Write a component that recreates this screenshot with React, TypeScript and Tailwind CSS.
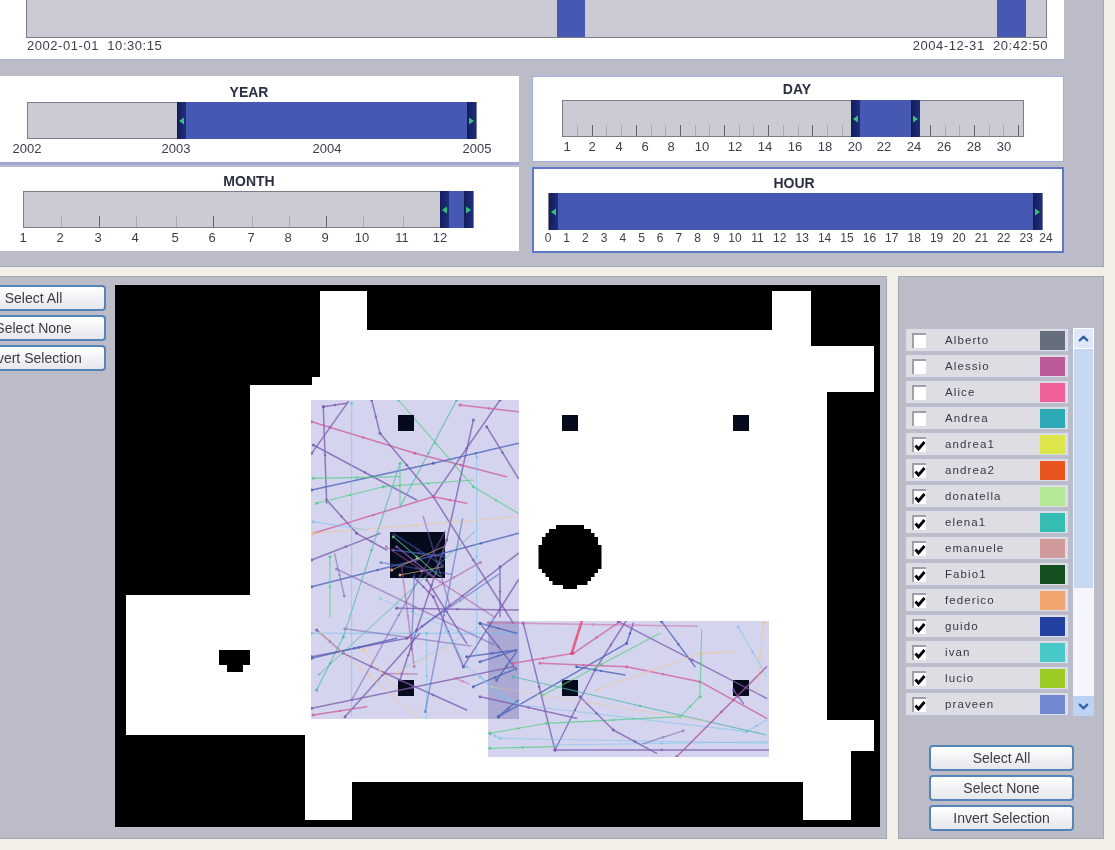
import React from "react";
import { ChevronUp, ChevronDown } from "lucide-react";

type Mark = { x: number; t: string };
const sans = "font-['Liberation_Sans',Arial,sans-serif]";

function Handle({ dir }: { dir: "l" | "r" }) {
  return (
    <div className="w-[9px] h-full bg-gradient-to-r from-[#131d58] to-[#1f2f80] flex items-center justify-center shrink-0">
      <svg width="7" height="8" viewBox="0 0 7 8">
        <path d={dir === "l" ? "M6 0.5 L1 4 L6 7.5Z" : "M1 0.5 L6 4 L1 7.5Z"} fill="#36c47a" />
      </svg>
    </div>
  );
}

function Slider(props: {
  title: string; center: number; titleH: number; left: number; width: number; start: number; end: number;
  ticks?: number[]; marks: Mark[]; size?: string; labelTop?: string;
}) {
  const { title, center, titleH, left, width, start, end, ticks = [], marks, size = "text-[13px]", labelTop = "top-[2px]" } = props;
  return (
    <div style={{ paddingLeft: left }}>
      <div style={{ marginLeft: -left, width: center * 2, height: titleH }} className="text-center text-[14px] leading-[18px] font-bold text-[#2b3040]">{title}</div>
      <div style={{ width }} className="relative h-[37px] flex bg-[#cbcbd3] border border-[#7b7d88]">
        {ticks.map((t, i) => (
          <div key={i} style={{ left: t }} className={`absolute bottom-0 w-px h-[11px] ${i % 3 === 1 ? "bg-[#5d6070]" : "bg-[#a9aab6]"}`} />
        ))}
        <div style={{ width: start }} className="shrink-0" />
        <div style={{ width: end - start }} className="relative z-10 -my-px flex justify-between bg-[#4658b2]">
          <Handle dir="l" />
          <Handle dir="r" />
        </div>
      </div>
      <div style={{ width }} className="relative h-[20px]">
        {marks.map((m) => (
          <span key={m.t + m.x} style={{ left: m.x }} className={`absolute ${labelTop} -translate-x-1/2 ${size} leading-[16px] text-[#3b3f4a]`}>{m.t}</span>
        ))}
      </div>
    </div>
  );
}

const yearMarks = [[0, "2002"], [149, "2003"], [300, "2004"], [450, "2005"]].map(([x, t]) => ({ x: x as number, t: t as string }));
const monthMarks = [0, 37, 75, 112, 152, 189, 228, 265, 302, 339, 379, 417].map((x, i) => ({ x, t: String(i + 1) }));
const dayMarks: Mark[] = [[5, "1"], [30, "2"], [57, "4"], [83, "6"], [109, "8"], [140, "10"], [173, "12"], [203, "14"], [233, "16"], [263, "18"], [293, "20"], [322, "22"], [352, "24"], [382, "26"], [412, "28"], [442, "30"]].map(([x, t]) => ({ x: x as number, t: t as string }));
const hourMarks = Array.from({ length: 25 }, (_, i) => ({ x: i === 24 ? 498 : i < 10 ? i * 18.7 : 187 + (i - 10) * 22.4, t: String(i) }));
const monthTicks = [37, 75, 112, 152, 189, 228, 265, 302, 339, 379];
const dayTicks = Array.from({ length: 31 }, (_, i) => 14 + i * 14.7).filter((x) => x < 285 || x > 355);

const people: [string, string, boolean][] = [
  ["Alberto", "#666d7d", false], ["Alessio", "#bd5a9a", false], ["Alice", "#ee6097", false], ["Andrea", "#2ca9b4", false],
  ["andrea1", "#dde64a", true], ["andrea2", "#e8551f", true], ["donatella", "#b4e896", true], ["elena1", "#35bdb4", true],
  ["emanuele", "#d09a9a", true], ["Fabio1", "#154f22", true], ["federico", "#f2a56e", true], ["guido", "#21409f", true],
  ["ivan", "#48c8c8", true], ["lucio", "#9ccb25", true], ["praveen", "#6f88d0", true],
];

const C: Record<string, string> = { v: "#7a5cae", b: "#4a62b8", p: "#cf5f9c", g: "#52cf86", l: "#78c4ea", o: "#f3c48c", t: "#4fb8a8", r: "#ea3f62", m: "#a9509c" };
const z5: [string, number, number, number, number][] = [
  ["v",35,190,145,35],["p",35,95,345,190],["p",345,190,620,260],["v",70,50,80,340],["v",70,50,140,40],["v",40,165,350,330],
  ["v",215,30,240,130],["v",240,130,400,320],["v",400,320,640,700],["t",470,30,300,350],["g",295,30,520,290],["g",520,290,655,370],
  ["v",600,30,400,320],["v",520,90,440,450],["v",440,450,350,720],["v",350,720,300,870],["b",35,300,400,220],["b",400,220,655,160],
  ["p",40,430,400,320],["p",400,320,500,340],["v",560,110,655,265],["p",480,45,655,65],["v",35,510,240,430],["o",40,430,655,380],
  ["b",35,590,430,490],["b",430,490,655,430],["v",80,330,170,430],["v",170,430,260,480],["v",290,655,655,660],["t",50,900,130,740],
  ["t",130,740,300,220],["v",35,800,320,745],["v",320,745,655,490],["b",35,805,290,745],["v",50,720,130,790],["v",130,790,300,870],
  ["v",300,870,500,960],["b",500,800,650,780],["v",490,830,655,570],["v",490,830,400,620],["v",400,620,340,560],["p",40,975,200,950],
  ["v",135,980,360,730],["v",35,955,640,830],["b",520,890,650,835],["b",595,980,655,930],["l",440,720,500,830],["l",500,830,655,950],
  ["g",40,265,300,260],["g",50,340,250,290],["g",250,290,520,270],["o",60,730,350,980],["l",380,730,380,985],["l",35,730,655,730],
  ["l",155,40,155,980],["l",530,200,530,800],["g",300,220,300,350],["g",90,500,90,680],["l",40,395,200,420],["o",190,780,290,900],
  ["v",600,530,600,680],["v",380,570,500,760],["o",275,540,430,470],["g",280,440,420,560],["b",280,480,435,500],["o",300,555,430,530],["v",290,470,400,560],
];
const z6: [string, number, number, number, number][] = [
  ["v",0,40,110,180],["v",130,40,225,420],["v",225,420,345,180],["v",345,180,440,30],["b",0,40,110,70],["b",55,320,440,100],["b",440,100,460,40],
  ["b",0,155,110,120],["b",50,210,110,125],["p",100,160,280,130],["p",280,130,420,35],["r",275,130,305,35],["p",180,160,440,170],["p",440,170,660,215],
  ["p",660,215,860,325],["b",290,170,435,195],["b",545,35,645,170],["v",415,35,860,265],["v",225,420,865,420],["l",0,200,60,260],["l",60,260,120,285],
  ["l",120,285,800,365],["l",800,365,860,330],["l",225,405,865,395],["g",30,415,225,410],["l",30,370,60,385],["l",60,385,860,400],["t",100,200,860,375],
  ["o",350,240,660,130],["o",660,130,770,125],["g",30,370,200,340],["g",200,340,600,320],["g",600,320,660,260],["g",660,260,665,60],["g",190,255,540,70],
  ["v",0,260,290,325],["v",300,260,400,360],["v",400,360,530,430],["m",590,440,860,170],["o",850,40,830,250],["v",760,240,790,280],["l",775,50,860,200],
];

let seed = 20240;
const rnd = () => {
  seed = (seed * 1664525 + 1013904223) % 4294967296;
  return seed / 4294967296;
};
const palette = "vvbbppmgltool";
const extra = Array.from({ length: 22 }, (_, i) => {
  const c = palette[Math.floor(rnd() * palette.length)];
  const a = i < 19 ? [311, 500, 208, 219] : [488, 621, 281, 136];
  return [c, a[0] + rnd() * a[2], a[1] + rnd() * a[3], a[0] + rnd() * a[2], a[1] + rnd() * a[3]] as const;
});

const segs = [
  ...z5.map(([c, a, b, d, e]) => [c, 300 + a / 3, 390 + b / 3, 300 + d / 3, 390 + e / 3] as const),
  ...z6.map(([c, a, b, d, e]) => [c, 480 + a / 3, 610 + b / 3, 480 + d / 3, 610 + e / 3] as const),
  ...extra,
];

const circleRows = Array.from({ length: 16 }, (_, i) => {
  const y = 525 + i * 4;
  const dy = y + 2 - 555.5;
  const half = Math.round(Math.sqrt(Math.max(0, 32 * 32 - dy * dy)) / 3.5) * 3.5;
  return { y, half };
});

function FloorMap() {
  const ox = 115, oy = 285;
  return (
    <svg width="765" height="542" viewBox={`${ox} ${oy} 765 542`} className="block bg-black shrink-0">
      <defs>
        <clipPath id="zones">
          <rect x="311" y="400" width="208" height="319" />
          <rect x="488" y="621" width="281" height="136" />
        </clipPath>
      </defs>
      <path fill="#fff" d="M320 291H367V330H772V291H811V346H874V392H827V720H874V751H851V820H803V782H352V820H305V735H126V595H250V385H312V377H320Z" />
      <rect x="311" y="400" width="208" height="319" fill="#d4d4ee" />
      <rect x="488" y="621" width="281" height="136" fill="#d4d4ee" />
      <rect x="488" y="621" width="31" height="98" fill="#a9a9d4" />
      {[[398, 680], [562, 680], [733, 680]].map(([x, y]) => (
        <rect key={x + "-" + y} x={x} y={y} width="16" height="16" fill="#050a1c" />
      ))}
      <rect x="390" y="532" width="55" height="46" fill="#050a1c" />
      {circleRows.map((r) => (
        <rect key={r.y} x={570 - r.half} y={r.y} width={r.half * 2} height="4" fill="#000" />
      ))}
      <path fill="#000" d="M219 650H250V665H243V672H227V665H219Z" />
      <g clipPath="url(#zones)" strokeLinecap="round">
        {segs.map(([c, x1, y1, x2, y2], i) => (
          <g key={i} stroke={C[c]} fill={C[c]} opacity={i >= z5.length + z6.length ? 0.6 : 0.9}>
            <line x1={x1} y1={y1} x2={x2} y2={y2} strokeWidth={c === "r" ? 2.6 : c === "v" || c === "b" || c === "p" || c === "m" ? 1.5 : 1.1} strokeOpacity={c === "o" || c === "l" ? 0.65 : 0.85} />
            <circle cx={x1} cy={y1} r="1.5" stroke="none" />
            <circle cx={(x1 + x2) / 2} cy={(y1 + y2) / 2} r="1.2" stroke="none" />
          </g>
        ))}
      </g>
      {[[398, 415], [562, 415], [733, 415]].map(([x, y]) => (
        <rect key={x + "-" + y} x={x} y={y} width="16" height="16" fill="#050a1c" />
      ))}
    </svg>
  );
}

function Btn({ children }: { children: React.ReactNode }) {
  return (
    <button className="h-[26px] w-[145px] shrink-0 rounded-[4px] border-2 border-[#5585b8] bg-gradient-to-b from-white to-[#e6e6ec] text-[14px] leading-[20px] text-[#3a3d46]">
      {children}
    </button>
  );
}

function Row({ name, color, on }: { name: string; color: string; on: boolean }) {
  return (
    <div className="h-[24px] flex items-center bg-[#dddde3] border border-[#b8bfd2]">
      <div className="ml-[6px] w-[14px] h-[15px] bg-white border-l-2 border-t-2 border-[#9d9faa] flex items-center justify-center shrink-0">
        {on && (
          <svg width="12" height="11" viewBox="0 0 12 11" className="shrink-0">
            <path d="M1.5 5.5 L4.5 9 L10.5 2" fill="none" stroke="#000" strokeWidth="2.8" />
          </svg>
        )}
      </div>
      <span className="ml-[19px] flex-1 text-[11.5px] leading-[14px] tracking-[1.1px] text-[#353844]">{name}</span>
      <div style={{ backgroundColor: color }} className="w-[25px] h-[19px] mr-[3px] shrink-0" />
    </div>
  );
}

export default function App() {
  return (
    <div className={`w-[1115px] h-[850px] overflow-hidden bg-[#f1efe6] ${sans} blur-[0.5px]`}>
      <div className="w-[1104px] h-[267px] bg-[#bcbcc8] border-r border-b border-[#a2a6b6]">
        <div className="w-[1064px] h-[60px] bg-white border-b border-[#aab2d8] pl-[26px]">
          <div className="w-[1021px] h-[38px] flex bg-[#cbcbd5] border-b border-x border-[#7b7d88]">
            <div className="w-[530px] shrink-0" />
            <div className="w-[28px] bg-[#4658b2] shrink-0" />
            <div className="w-[412px] shrink-0" />
            <div className="w-[29px] bg-[#4658b2] shrink-0" />
          </div>
          <div className="w-[1022px] pl-[1px] flex justify-between text-[13px] leading-[16px] tracking-[0.55px] text-[#3b3f4a]">
            <span className="whitespace-pre">2002-01-01  10:30:15</span>
            <span className="whitespace-pre">2004-12-31  20:42:50</span>
          </div>
        </div>
        <div className="mt-[16px] flex gap-[13px]">
          <div className="w-[519px] flex flex-col gap-[2px]">
            <div className="h-[89px] bg-white border-b-[3px] border-[#9ea6d2] pt-[7px]">
              <Slider title="YEAR" center={249} titleH={19} left={27} width={450} start={149} end={450} marks={yearMarks} />
            </div>
            <div className="h-[84px] bg-white pt-[5px]">
              <Slider title="MONTH" center={249} titleH={19} left={23} width={451} start={416} end={451} ticks={monthTicks} marks={monthMarks} />
            </div>
          </div>
          <div className="w-[532px] flex flex-col gap-[5px]">
            <div className="h-[86px] bg-white border border-[#a3aedc] pt-[3px]">
              <Slider title="DAY" center={264} titleH={20} left={29} width={462} start={288} end={357} ticks={dayTicks} marks={dayMarks} />
            </div>
            <div className="h-[86px] bg-white border-2 border-[#5f78cc] pt-[5px]">
              <Slider title="HOUR" center={260} titleH={19} left={14} width={495} start={0} end={494} marks={hourMarks} size="text-[12px]" labelTop="top-[0px]" />
            </div>
          </div>
        </div>
      </div>
      <div className="mt-[9px] flex gap-[11px]">
        <div className="w-[887px] h-[563px] bg-[#bcbcc8] border-t border-r border-b border-[#a2a6b6] pt-[8px] flex overflow-hidden">
          <div className="w-[115px] shrink-0 flex flex-col gap-[4px] ml-[-39px] mr-[39px]">
            <div className="w-[145px] flex flex-col gap-[4px]">
              <Btn>Select All</Btn>
              <Btn>Select None</Btn>
              <Btn>Invert Selection</Btn>
            </div>
          </div>
          <FloorMap />
        </div>
        <div className="w-[206px] h-[563px] bg-[#bcbcc8] border border-[#a2a6b6] pt-[51px] pl-[6px]">
          <div className="flex gap-[4px] h-[388px]">
            <div className="w-[164px] flex flex-col gap-[2px]">
              {people.map(([n, c, on]) => <Row key={n} name={n} color={c} on={on} />)}
            </div>
            <div className="w-[21px] flex flex-col bg-[#f5f6fc]">
              <div className="h-[21px] bg-[#dfe8f8] border border-white flex items-center justify-center">
                <ChevronUp size={15} strokeWidth={3.5} className="text-[#2d62a8]" />
              </div>
              <div className="h-[239px] mx-[1px] bg-[#c6d7f1]" />
              <div className="flex-1" />
              <div className="h-[20px] bg-[#bdd3f3] flex items-center justify-center">
                <ChevronDown size={15} strokeWidth={3.5} className="text-[#2d62a8]" />
              </div>
            </div>
          </div>
          <div className="mt-[29px] ml-[24px] flex flex-col gap-[4px]">
            <Btn>Select All</Btn>
            <Btn>Select None</Btn>
            <Btn>Invert Selection</Btn>
          </div>
        </div>
      </div>
    </div>
  );
}
